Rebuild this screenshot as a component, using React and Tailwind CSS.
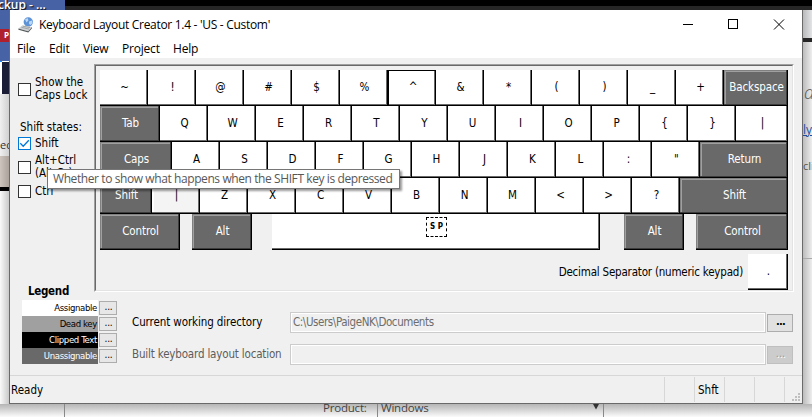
import React from "react";

const TAHOMA = "font-['DejaVu_Sans_Condensed','DejaVu_Sans',sans-serif] [font-stretch:condensed]";
const SEGOE = "font-['Open_Sans','Noto_Sans',sans-serif] [font-stretch:normal]";

function Key({ children, width = "w-12", variant = "light" }) {
  const look = {
    light: "bg-white text-black border-r border-b border-black shadow-[inset_-1px_-1px_0_#696969]",
    hover: "bg-[#f4f4f4] text-black border-r border-b border-black shadow-[inset_-1px_-1px_0_#696969,inset_2px_2px_0_#ffffff]",
    focus: "bg-white text-black border border-black shadow-[inset_-1px_-1px_0_#696969]",
    dark: "bg-[#696969] text-white border-r border-b border-black shadow-[inset_-1px_-1px_0_#3c3c3c,inset_1px_1px_0_#808080,inset_2px_2px_0_#a0a0a0] tracking-[-0.1px]",
  }[variant];
  return (
    <div className={`${width} ${look} h-9 shrink-0 flex items-center justify-center whitespace-pre pl-[2px] text-[11.5px] leading-none`}>
      {children}
    </div>
  );
}

const letters = (s) => s.split("").map((c) => <Key key={c} variant={c === "^" ? "focus" : "light"}>{c}</Key>);

function Check({ checked }) {
  return (
    <span className={`size-[13px] shrink-0 border bg-white ${checked ? "border-[#0078d7]" : "border-[#333333]"}`}>
      {checked && (
        <svg viewBox="0 0 11 11" className="block size-[11px]" fill="none" stroke="#0078d7" strokeWidth="1.3">
          <path d="M1.3 5.3 4.2 8.2 9.8 2.3" />
        </svg>
      )}
    </span>
  );
}

function AppIcon() {
  return (
    <svg viewBox="0 0 16 16" className="size-4">
      <circle cx="10.3" cy="5" r="4.7" fill="#5d93d6" />
      <path d="M7 2.5 9.5 1l1 2.2-2 2.3zM11 4.5l3-1 .6 2.4-2 2.2-1.5-1z" fill="#b9d6f5" />
      <path d="M9 9.4h3l-.4 1.6H9.3z" fill="#9aa4b0" />
      <path d="M4.5 8.2 14 10l-3.8 4.2L.4 11.6z" fill="#cfd2d4" />
      <path d="M4.8 9.2 12 10.6M3.4 10.3l7.6 1.8" stroke="#8d9296" strokeWidth=".7" />
      <path d="M.4 11.6 10.2 14.2 14 10v1.2l-3.7 4.3L.4 12.8z" fill="#555a5e" />
    </svg>
  );
}

function LegendRow({ label, color }) {
  return (
    <div className="flex h-4 items-center">
      <div className={`${color} flex h-4 w-[76px] items-center justify-end pr-[1px] text-[9.5px] leading-none tracking-[-0.35px] whitespace-nowrap`}>{label}</div>
      <div className="ml-px flex h-[14px] w-[18px] items-center justify-center border border-[#adadad] bg-[#e7e7e7] pb-[3px] pl-px text-[10px] leading-none tracking-[-0.2px]">...</div>
    </div>
  );
}

function PathRow({ label, value, disabled }) {
  return (
    <div className="flex h-[21px] items-center">
      <div className={`w-[158px] shrink-0 pt-px text-[11.5px] leading-none whitespace-nowrap ${disabled ? "tracking-[-0.17px] text-[#5c5c5c]" : "tracking-[-0.1px] text-black"}`}>{label}</div>
      <div className="flex h-[21px] w-[476px] items-center border border-[#cccccc] pl-[2px] text-[11.5px] leading-none tracking-[-0.42px] text-[#6d6d6d] shadow-[inset_0_0_0_1px_#ffffff]">{value}</div>
      <div className={`ml-px flex h-[18px] w-[26px] items-center justify-center border pb-[2px] pl-px text-[11px] leading-none ${disabled ? "border-[#bfbfbf] bg-[#cccccc] text-[#9a9a9a] [text-shadow:1px_1px_#fff]" : "border-[#adadad] bg-[#e1e1e1] font-bold tracking-[-0.8px]"}`}>...</div>
    </div>
  );
}

function Backdrop() {
  return (
    <div className={`flex h-[417px] w-[812px] flex-col overflow-hidden bg-white ${SEGOE}`}>
      <div className="flex h-[10px]">
        <div className="flex h-[10px] w-[65px] items-end overflow-hidden bg-[#4862a6] text-[12px] leading-[12px] font-semibold whitespace-nowrap text-white [text-shadow:1px_1px_1px_#000]">
          <span className="-ml-[2px] mb-[-1px]">ckup - ...</span>
        </div>
        <div className="flex-1 border-b-4 border-[#262626] bg-black" />
      </div>
      <div className="flex h-[394px] justify-between">
        <div className="flex w-[9px] flex-col overflow-hidden">
          <div className="h-[19px] bg-[#4862a6]" />
          <div className="h-[13px] bg-[#b01f2c] pl-[4px] text-[8px] leading-[12px] font-bold text-white">P</div>
          <div className="h-[19px] bg-[#4862a6]" />
          <div className="h-px w-[2px] bg-[#1e90ff]" />
          <div className="ml-[2px] h-[32px] bg-[#1b1d36]" />
          <div className="h-[62px] bg-gradient-to-r from-[#f0f0f0] to-[#d0d0d0] pt-[43px] text-[11px] leading-[16px] text-[#333333]">ec</div>
          <div className="h-[31px] bg-gradient-to-r from-[#cdc5be] to-[#aaa29b]" />
          <div className="h-[4px] bg-black" />
          <div className="flex-1 bg-gradient-to-r from-[#fafafa] to-[#c9c9c9]" />
        </div>
        <div className="flex w-[9px] flex-col overflow-hidden bg-gradient-to-r from-[#bcbcbc] to-[#eeeeee]">
          <div className="h-[28px] bg-gradient-to-r from-[#b8b9bb] to-[#e2e4e6]" />
          <div className="h-[4px] bg-[#262626]" />
          <div className="h-[60px] pt-[40px] pl-px text-[18px] leading-[20px] font-light text-[#555555] italic">a</div>
          <div className="h-[38px] pt-[20px] text-[12px] leading-[16px] text-[#1d4fa0] underline">ly</div>
          <div className="h-[118px] pt-[18px] text-[11px] leading-[16px] text-[#555555]">clic</div>
          <div className="h-px bg-[#aaaaaa]" />
        </div>
      </div>
      <div className="flex h-[13px] bg-gradient-to-b from-[#b5b5b5] to-[#fbfbfb] text-[11.5px] leading-[13px] tracking-[-0.2px] text-[#444444]">
        <div className="w-[64px]" />
        <div className="w-[259px] border-l border-[#888888]" />
        <div className="w-[54px]"><span className="-mt-[3px] block">Product:</span></div>
        <div className="flex w-[227px] justify-between border-x border-[#888888] pr-[3px] pl-[3px]">
          <span className="-mt-[3px] block">Windows</span>
          <svg viewBox="0 0 8 6" className="h-[6px] w-[8px]"><path d="M1 0H7L4 5.5z" fill="#333" /></svg>
        </div>
      </div>
    </div>
  );
}

export default function App() {
  return (
    <div className="relative h-[417px] w-[812px] overflow-hidden">
      <Backdrop />
      <div className={`absolute top-[10px] left-[9px] flex h-[394px] w-[794px] flex-col border-x border-b border-[#6a6a6a] bg-[#f0f0f0] text-black ${TAHOMA}`}>
        {/* Title bar */}
        <div className={`flex h-[30px] items-center bg-white pl-[8px] ${SEGOE}`}>
          <AppIcon />
          <span className="ml-[5px] text-[12px] leading-none tracking-[-0.3px] whitespace-nowrap">Keyboard Layout Creator 1.4 - 'US - Custom'</span>
          <svg viewBox="0 0 110 30" className="mr-[12px] ml-auto h-[30px] w-[110px]" fill="none" stroke="#000" strokeWidth="1" shapeRendering="crispEdges">
            <path d="M3 14.5h10M48.5 9.5h9v9h-9z" />
            <path d="M94 9.5l10 10M104 9.5l-10 10" shapeRendering="auto" />
          </svg>
        </div>
        <div className={`flex h-[18px] bg-white pl-[7px] text-[12px] leading-[18px] tracking-[-0.2px] ${SEGOE}`}>
          <span className="w-[32px]">File</span>
          <span className="w-[34px]">Edit</span>
          <span className="w-[39px]">View</span>
          <span className="w-[51px]">Project</span>
          <span>Help</span>
        </div>

        {/* Shift states and keyboard */}
        <div className="flex h-[234px] pt-[6px]">
          <div className="flex w-[84px] shrink-0 flex-col pl-[8px] text-[11.5px] leading-[13px] whitespace-nowrap">
            <div className="mt-[12px] flex h-[26px] items-center gap-[4px]"><Check /><span>Show the<br />Caps Lock</span></div>
            <div className="mt-[19px] h-[13px] pl-[2px]">Shift states:</div>
            <div className="mt-[3px] flex h-[13px] items-center gap-[4px]"><Check checked /><span>Shift</span></div>
            <div className="mt-[4px] flex h-[26px] items-center gap-[4px]"><Check /><span>Alt+Ctrl<br />(Alt Gr)</span></div>
            <div className="mt-[5px] flex h-[13px] items-center gap-[4px]"><Check /><span>Ctrl</span></div>
          </div>
          <div className="h-[228px] w-[700px] border border-t-[#a0a0a0] border-r-white border-b-white border-l-[#a0a0a0]">
            <div className="flex h-full flex-col border border-t-[#696969] border-r-[#e3e3e3] border-b-[#e3e3e3] border-l-[#696969] pt-[4px] pl-[4px]">
              <div className="flex">{letters("~!@#$%^&*()_+")}<Key width="w-16" variant="dark">Backspace</Key></div>
              <div className="flex"><Key width="w-[60px]" variant="dark">Tab</Key>{letters("QWERTYUIOP{}")}<Key width="w-[52px]">|</Key></div>
              <div className="flex"><Key width="w-[72px]" variant="dark">Caps</Key>{letters("ASDFGHJKL:\"")}<Key width="w-[88px]" variant="dark">Return</Key></div>
              <div className="flex"><Key width="w-[52px]" variant="dark">Shift</Key><Key variant="hover">|</Key>{letters("ZXCVBNM<>?")}<Key width="w-[108px]" variant="dark">Shift</Key></div>
              <div className="flex">
                <Key width="w-[80px]" variant="dark">Control</Key>
                <div className="w-3" />
                <Key width="w-[60px]" variant="dark">Alt</Key>
                <div className="w-5" />
                <Key width="w-[328px]">
                  <span className="mb-[9px] flex h-5 w-[21px] items-center justify-center border border-dashed border-black text-[8px] font-bold">S P</span>
                </Key>
                <div className="w-6" />
                <Key width="w-[60px]" variant="dark">Alt</Key>
                <div className="w-3" />
                <Key width="w-[92px]" variant="dark">Control</Key>
              </div>
              <div className="mt-[4px] flex w-[688px] items-center justify-end">
                <span className="mr-[5px] pt-[2px] text-[11.5px] leading-none tracking-[-0.2px]">Decimal Separator (numeric keypad)</span>
                <Key width="w-10">.</Key>
              </div>
            </div>
          </div>
        </div>

        {/* Legend and directories */}
        <div className="flex h-[83px]">
          <div className="w-[122px] shrink-0 pl-[12px]">
            <div className="-mt-[8px] h-[16px] pl-[6px] text-[11.5px] leading-[15px] font-bold tracking-[-0.3px]">Legend</div>
            <LegendRow label="Assignable" color="bg-white text-black" />
            <LegendRow label="Dead key" color="bg-[#a0a0a0] text-black" />
            <LegendRow label="Clipped Text" color="bg-black text-white" />
            <LegendRow label="Unassignable" color="bg-[#696969] text-white" />
          </div>
          <div className="flex flex-col gap-[11px] pt-[20px]">
            <PathRow label="Current working directory" value="C:\Users\PaigeNK\Documents" />
            <PathRow label="Built keyboard layout location" disabled />
          </div>
        </div>

        {/* Status bar */}
        <div className="flex h-[28px] border-t border-[#d7d7d7] pt-px text-[11.5px] leading-[27px]">
          <div className="w-[654px] pl-px">Ready</div>
          <div className="h-[25px] w-[30px] border-l border-[#d7d7d7]" />
          <div className="h-[25px] w-[30px] border-l border-[#d7d7d7] pl-[3px]">Shft</div>
          <div className="h-[25px] w-[30px] border-l border-[#d7d7d7]" />
          <div className="h-[25px] w-[30px] border-l border-[#d7d7d7]" />
          <div className="flex h-[25px] w-[18px] items-end justify-end border-l border-[#d7d7d7] pr-[2px] pb-px">
            <svg viewBox="0 0 8 8" className="size-2" fill="#bfbfbf">
              <path d="M6 0h2v2H6zM3 3h2v2H3zM6 3h2v2H6zM0 6h2v2H0zM3 6h2v2H3zM6 6h2v2H6z" />
            </svg>
          </div>
        </div>
      </div>

      {/* Tooltip of the Shift check box */}
      <div className={`absolute top-[169px] left-[47px] flex h-[20px] w-[353px] items-center border border-[#767676] bg-white pl-[5px] text-[12px] leading-none tracking-[-0.41px] whitespace-nowrap text-[#575757] shadow-[2px_2px_2px_rgba(0,0,0,0.4)] ${SEGOE}`}>
        Whether to show what happens when the SHIFT key is depressed
      </div>
    </div>
  );
}
